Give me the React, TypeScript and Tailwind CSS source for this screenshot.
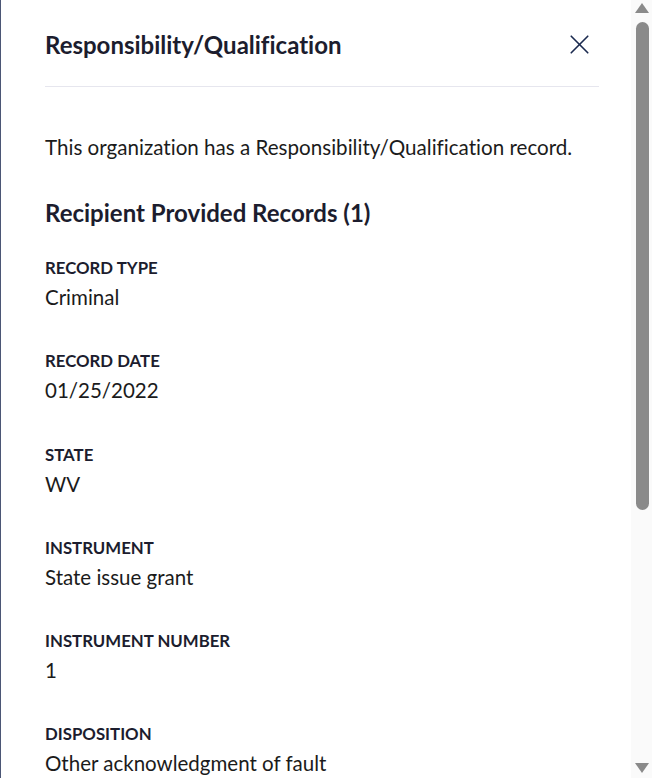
import { X } from 'lucide-react';

const records = [
  { label: 'Record Type', value: 'Criminal' },
  { label: 'Record Date', value: '01/25/2022' },
  { label: 'State', value: 'WV' },
  { label: 'Instrument', value: 'State issue grant' },
  { label: 'Instrument Number', value: '1' },
  { label: 'Disposition', value: 'Other acknowledgment of fault' },
];

function Scrollbar() {
  return (
    <div className="w-[21px] shrink-0 bg-[#fafafa] flex flex-col items-center pl-[1px]">
      <div className="mt-[3px] w-0 h-0 border-l-[7px] border-r-[7px] border-b-[10px] border-l-transparent border-r-transparent border-b-[#8a8a8a]" />
      <div className="mt-[9px] w-[13px] h-[488px] rounded-full bg-[#8a8a8a]" />
      <div className="flex-1" />
      <div className="mb-[5px] w-0 h-0 border-l-[7px] border-r-[7px] border-t-[10px] border-l-transparent border-r-transparent border-t-[#8a8a8a]" />
    </div>
  );
}

export default function App() {
  return (
    <div
      className="w-[652px] h-[778px] flex bg-white overflow-hidden text-[#1b1b1b] [font-variant-ligatures:none]"
      style={{ fontFamily: 'Lato, "Noto Sans", sans-serif' }}
    >
      {/* backdrop edge */}
      <div className="w-[1px] shrink-0 bg-[#4b5675]" />

      <div className="flex-1 min-w-0 pl-[44px] pr-[32px]">
        {/* Header */}
        <div className="flex items-center justify-between pt-[28px] pb-[25px] border-b border-[#e6e6ee]">
          <h2 className="text-[24px] leading-[32px] font-bold text-[#1c1d2e]">Responsibility/Qualification</h2>
          <button className="mr-[3px] text-[#1b2a4f]">
            <X className="w-[33px] h-[33px]" strokeWidth={1.2} />
          </button>
        </div>

        <p className="mt-[46px] text-[20.6px] leading-[28px]">
          This organization has a Responsibility/Qualification record.
        </p>

        <h3 className="mt-[37px] text-[24px] leading-[30px] font-bold text-[#1c1d2e]">
          Recipient Provided Records (1)
        </h3>

        <dl className="mt-[29px] flex flex-col gap-[39.3px]">
          {records.map((r) => (
            <div key={r.label} className="flex flex-col gap-[4px]">
              <dt className="text-[16.8px] leading-[22px] font-bold uppercase text-[#1c1d2e]">{r.label}</dt>
              <dd className="text-[20.5px] leading-[28px]">{r.value}</dd>
            </div>
          ))}
        </dl>
      </div>

      <Scrollbar />
    </div>
  );
}
